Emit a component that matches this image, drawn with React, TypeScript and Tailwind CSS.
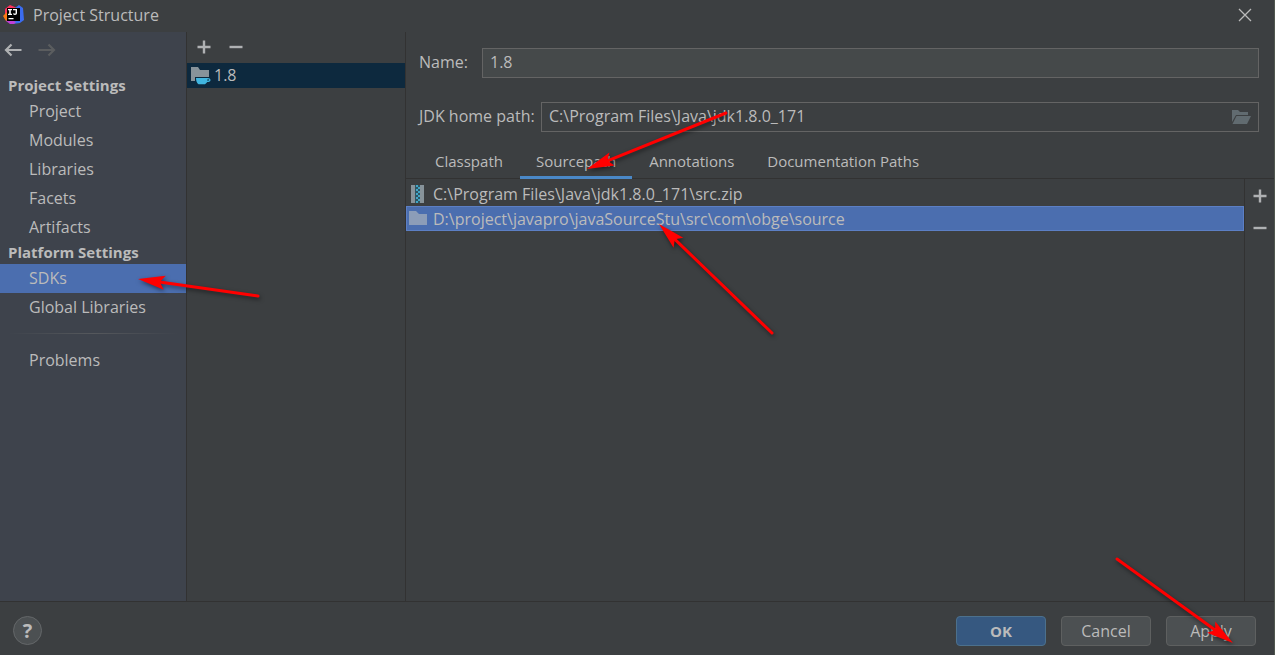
import { useState } from "react"

const projectItems = ["Project", "Modules", "Libraries", "Facets", "Artifacts"]
const platformItems = ["SDKs", "Global Libraries"]
const tabs = ["Classpath", "Sourcepath", "Annotations", "Documentation Paths"]

const PlusIcon = () => (
  <svg width="14" height="14" viewBox="0 0 14 14" fill="#afb1b3">
    <path d="M5.800.5h2.400v5.300h5.300v2.400H8.200v5.300H5.800V8.200H.5V5.800h5.300z" />
  </svg>
)

const MinusIcon = () => (
  <svg width="14" height="14" viewBox="0 0 14 14" fill="#afb1b3">
    <path d="M.5 5.800h13v2.400H.5z" />
  </svg>
)

const BackIcon = ({ color }: { color: string }) => (
  <svg width="18" height="14" viewBox="0 0 18 14" fill="none" stroke={color} strokeWidth="2.200">
    <path d="M17.500 7H2.500M7.500 1.500L2 7l5.500 5.500" />
  </svg>
)

const AppLogo = () => (
  <svg width="22" height="22" viewBox="0 0 22 22">
    <path d="M2 5L7 1l7 3v5L5 17 2 13z" fill="#fe315d" />
    <path d="M0 12l4-4 2 8-3 1z" fill="#f97a12" />
    <path d="M12 4l4-3 4 3 1 12-4 3-7 1z" fill="#3b6cf0" />
    <path d="M3 17l3-2 7 3-2 2-4 0z" fill="#c13fd6" />
    <path d="M4 4h13v13H4z" fill="#000" />
    <path d="M5 5h4v1.300H7.800v3.400H9V11H5V9.700h1.200V6.300H5zM10 5h4v4.200Q14 11 12 11q-1.300 0-2-.9l.9-1q.5.6 1 .6.700 0 .7-.8V6.300H10zM5.500 14h5v1.300h-5z" fill="#fff" />
  </svg>
)

const SdkIcon = () => (
  <svg width="20" height="20" viewBox="0 0 20 20">
    <path d="M0 1h7l2 3h9v7H4v4H0z" fill="#87939a" />
    <path
      d="M5 12h11.500q3 0 3 2t-3.300 2q-1 1.500-2.200 2.200H7.500Q5 16.500 5 12zM16.500 13.200l-.2 1.500q2 0 2-.8t-1.800-.7z"
      fill="#40b6e0"
      fillRule="evenodd"
    />
  </svg>
)

const FolderIcon = () => (
  <svg width="18" height="16" viewBox="0 0 18 16">
    <path d="M0 0h7l3 3h8v11H0z" fill="#8c9db8" />
  </svg>
)

const ZipIcon = () => (
  <svg width="18" height="18" viewBox="0 0 18 18">
    <path d="M2 0h4v18H2zM11 0h4v18h-4z" fill="#87939a" />
    <path d="M6 0h5v18H6z" fill="#2f5563" />
    <path
      d="M7 0h2v2H7zM9 2h2v2H9zM7 4h2v2H7zM9 6h2v2H9zM7 8h2v2H7zM9 10h2v2H9zM7 12h2v2H7zM9 14h2v2H9zM7 16h2v2H7z"
      fill="#40a6c8"
    />
  </svg>
)

const OpenFolderIcon = () => (
  <svg width="20" height="16" viewBox="0 0 20 16" fill="#616b70">
    <path d="M0 1h6l2 2h8v3H4l-4 7z" />
    <path d="M4.500 7H19l-4 8H.5z" />
  </svg>
)

type ArrowProps = {
  className: string
  width: number
  height: number
  from: [number, number]
  to: [number, number]
}

// Red annotation arrow, drawn from its tail to its tip
const Arrow = ({ className, width, height, from, to }: ArrowProps) => {
  const angle = (Math.atan2(to[1] - from[1], to[0] - from[0]) * 180) / Math.PI
  const length = Math.hypot(to[0] - from[0], to[1] - from[1])
  return (
    <svg
      className={`pointer-events-none absolute z-10 overflow-visible drop-shadow-[1px_2px_2px_rgba(0,0,0,0.5)] ${className}`}
      width={width}
      height={height}
      aria-hidden="true"
    >
      <g transform={`translate(${to[0]} ${to[1]}) rotate(${angle})`} fill="#ff0000">
        <path d={`M${-length} 0H-20`} stroke="#ff0000" strokeWidth="3" strokeLinecap="round" />
        <path d="M0 0L-27 7L-22 0L-27 -7Z" />
      </g>
    </svg>
  )
}

const App = () => {
  const [section, setSection] = useState("SDKs")
  const [tab, setTab] = useState("Sourcepath")

  const navItem = (name: string) => (
    <button
      key={name}
      type="button"
      onClick={() => setSection(name)}
      className={`flex h-[29px] w-full items-center pb-px pl-[29px] ${section === name ? "bg-[#4b6eaf]" : ""}`}
    >
      {name}
    </button>
  )

  return (
    <div className="flex min-h-screen flex-col border-r border-[#50574f] bg-[#3c3f41] font-['Open_Sans',sans-serif] text-[16px] leading-5 text-[#bbbbbb]">
      {/* Title bar */}
      <header className="flex h-8 items-center pb-[2px] pl-[3px] pr-[22px]">
        <AppLogo />
        <h1 className="ml-2 flex-1">Project Structure</h1>
        <button type="button" aria-label="Close">
          <svg width="14" height="14" viewBox="0 0 14 14" stroke="#bbbbbb" strokeWidth="1.300">
            <path d="M1 1l12 12M13 1L1 13" />
          </svg>
        </button>
      </header>

      <div className="flex flex-1">
        {/* Sections */}
        <nav className="relative w-[187px] shrink-0 border-r border-[#323232] bg-[#3e434c]">
          <div className="flex h-[43px] gap-4 pl-1 pt-[11px]">
            <button type="button" aria-label="Back" className="h-[14px]">
              <BackIcon color="#afb1b3" />
            </button>
            <button type="button" aria-label="Forward" className="h-[14px] rotate-180" disabled>
              <BackIcon color="#5b5d5f" />
            </button>
          </div>
          <h2 className="h-[22px] pl-2 text-[15px] font-bold leading-5">Project Settings</h2>
          {projectItems.map(navItem)}
          <h2 className="h-[22px] pl-2 text-[15px] font-bold leading-5">Platform Settings</h2>
          {platformItems.map(navItem)}
          <div className="mx-2 mb-3 mt-[11px] h-px bg-gradient-to-r from-transparent via-[#55585c] to-transparent" />
          {navItem("Problems")}
          <Arrow className="left-[138px] top-[240px]" width={122} height={28} from={[120, 24]} to={[0, 7]} />
        </nav>

        {/* SDK list */}
        <section className="w-[219px] shrink-0 border-r border-[#323232]">
          <div className="flex h-[31px] items-center gap-[18px] pb-px pl-[10px]">
            <button type="button" aria-label="Add SDK">
              <PlusIcon />
            </button>
            <button type="button" aria-label="Remove SDK">
              <MinusIcon />
            </button>
          </div>
          <button type="button" className="flex h-[25px] w-full items-center gap-[3px] bg-[#0d293e] pl-1">
            <SdkIcon />
            <span className="pb-px">1.8</span>
          </button>
        </section>

        {/* SDK details */}
        <main className="relative flex min-w-0 flex-1 flex-col">
          <div className="flex flex-col gap-6 pl-[13px] pr-[15px] pt-4">
            <div className="flex items-center">
              <label htmlFor="sdk-name" className="w-[63px] pb-[2px]">
                Name:
              </label>
              <input
                id="sdk-name"
                defaultValue="1.8"
                className="h-[30px] min-w-0 flex-1 border border-[#646464] bg-[#45494a] px-[7px] pb-[2px] outline-none"
              />
            </div>
            <div className="flex items-center">
              <label htmlFor="sdk-path" className="w-[122px] whitespace-nowrap pb-[2px]">
                JDK home path:
              </label>
              <div className="flex h-[30px] min-w-0 flex-1 items-center border border-[#646464] pr-[6px]">
                <input
                  id="sdk-path"
                  defaultValue="C:\Program Files\Java\jdk1.8.0_171"
                  className="min-w-0 flex-1 bg-transparent px-[7px] pb-[2px] outline-none"
                />
                <button type="button" aria-label="Browse">
                  <OpenFolderIcon />
                </button>
              </div>
            </div>
          </div>

          <div role="tablist" className="mt-3 flex h-[35px] gap-px border-b border-[#323232] pl-[13px] text-[15px]">
            {tabs.map((name) => (
              <button
                key={name}
                type="button"
                role="tab"
                aria-selected={tab === name}
                onClick={() => setTab(name)}
                className={`h-[35px] border-b-[3px] px-4 pt-px ${tab === name ? "border-[#4a88c7]" : "border-transparent"}`}
              >
                {name}
              </button>
            ))}
          </div>

          <div className="flex flex-1">
            <ul className="min-w-0 flex-1 border-r border-[#323232] pt-[2px]">
              <li className="flex h-[25px] items-center gap-[6px] pl-[3px]">
                <ZipIcon />
                {"C:\\Program Files\\Java\\jdk1.8.0_171\\src.zip"}
              </li>
              <li className="flex h-[25px] items-center gap-[6px] border border-[#5c7fc4] bg-[#4b6eaf] pl-[2px]">
                <FolderIcon />
                {"D:\\project\\javapro\\javaSourceStu\\src\\com\\obge\\source"}
              </li>
            </ul>
            <div className="flex w-[29px] flex-col items-center gap-[18px] pt-[10px]">
              <button type="button" aria-label="Add path">
                <PlusIcon />
              </button>
              <button type="button" aria-label="Remove path">
                <MinusIcon />
              </button>
            </div>
          </div>

          <Arrow className="left-[180px] top-[80px]" width={142} height={60} from={[140, 1]} to={[1, 57]} />
          <Arrow className="left-[252px] top-[192px]" width={116} height={112} from={[114, 109]} to={[1, 0]} />
        </main>
      </div>

      {/* Buttons */}
      <footer className="relative flex h-[54px] items-center gap-[15px] border-t border-[#323232] pl-[13px] pr-[18px] pt-1">
        <button
          type="button"
          aria-label="Help"
          className="flex size-[29px] items-center justify-center rounded-full border border-[#646769] bg-[#4c5052] text-[20px] font-bold"
        >
          ?
        </button>
        <div className="flex-1" />
        <button type="button" className="h-[30px] w-[90px] rounded border border-[#4c708c] bg-[#365880] text-[15px] font-bold">
          OK
        </button>
        <button type="button" className="h-[30px] w-[90px] rounded border border-[#5e6060] bg-[#4c5052]">
          Cancel
        </button>
        <button type="button" className="h-[30px] w-[90px] rounded border border-[#5e6060] bg-[#4c5052]">
          Apply
        </button>
        <Arrow className="bottom-[12px] right-[42px]" width={116} height={86} from={[1, 2]} to={[117, 86]} />
      </footer>
    </div>
  )
}

export default App
